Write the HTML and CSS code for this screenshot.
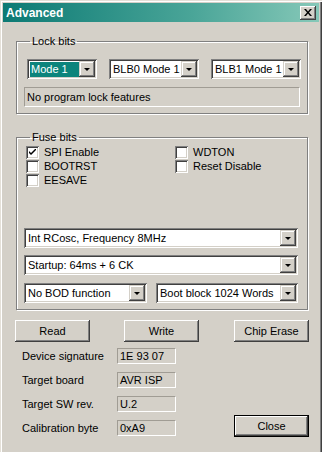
FILE: index.html
```html
<!DOCTYPE html>
<html>
<head>
<meta charset="utf-8">
<link rel="stylesheet" href="styles.css">
</head>
<body>
<div class="window">
  <div class="titlebar">
    <span class="title">Advanced</span>
    <span class="tb-close"><svg width="8" height="7" viewBox="0 0 8 7"><path d="M0 0h2l2 2.5L6 0h2L5 3.5 8 7H6L4 4.5 2 7H0l3-3.5z" fill="#000"/></svg></span>
  </div>

  <fieldset class="group lock">
    <legend>Lock bits</legend>
    <div class="row3">
      <div class="combo w70"><span class="val"><span class="sel">Mode 1</span></span><span class="arrow"></span></div>
      <div class="combo w90"><span class="val">BLB0 Mode 1</span><span class="arrow"></span></div>
      <div class="combo w90"><span class="val">BLB1 Mode 1</span><span class="arrow"></span></div>
    </div>
    <div class="field status">No program lock features</div>
  </fieldset>

  <fieldset class="group fuse">
    <legend>Fuse bits</legend>
    <div class="checks">
      <div class="chk"><span class="box"><svg width="7" height="7" viewBox="0 0 7 7"><path d="M0 2v2l2 2 5-5V-1L2 4z" fill="#000"/></svg></span>SPI Enable</div>
      <div class="chk"><span class="box"></span>WDTON</div>
      <div class="chk"><span class="box"></span>BOOTRST</div>
      <div class="chk"><span class="box"></span>Reset Disable</div>
      <div class="chk"><span class="box"></span>EESAVE</div>
    </div>
    <div class="combo full first"><span class="val">Int RCosc, Frequency 8MHz</span><span class="arrow"></span></div>
    <div class="combo full next"><span class="val">Startup: 64ms + 6 CK</span><span class="arrow"></span></div>
    <div class="row2">
      <div class="combo w123"><span class="val">No BOD function</span><span class="arrow"></span></div>
      <div class="combo w142"><span class="val">Boot block 1024 Words</span><span class="arrow"></span></div>
    </div>
  </fieldset>

  <div class="buttons">
    <div class="btn">Read</div>
    <div class="btn write">Write</div>
    <div class="btn erase">Chip Erase</div>
  </div>

  <div class="bottom">
    <div class="info">
      <span class="lbl">Device signature</span><span class="field ro">1E 93 07</span>
      <span class="lbl">Target board</span><span class="field ro">AVR ISP</span>
      <span class="lbl">Target SW rev.</span><span class="field ro">U.2</span>
      <span class="lbl">Calibration byte</span><span class="field ro">0xA9</span>
    </div>
    <div class="btn default">Close</div>
  </div>
</div>
</body>
</html>
```

FILE: styles.css
```css
* { box-sizing: border-box; }
html, body { margin: 0; padding: 0; }
body {
  width: 322px;
  height: 452px;
  overflow: hidden;
  background: #d4d0c8;
  font-family: "Liberation Sans", Arial, sans-serif;
  font-size: 11px;
  color: #000;
}
.window {
  height: 452px;
  padding: 3px 3px 0 3px;
  background: #d4d0c8;
  box-shadow: inset 1px 1px #e4e0d8, inset 2px 2px #fff, inset -1px 0 #404040, inset -2px 0 #808080;
}
.titlebar {
  height: 19px;
  display: flex;
  align-items: center;
  justify-content: space-between;
  padding: 0 3px 0 3px;
  background: linear-gradient(to right, #0c7a74, #4aa598 60%, #86c8b8);
}
.title {
  color: #fff;
  font-weight: bold;
  font-size: 12px;
}
.tb-close {
  width: 16px;
  height: 14px;
  display: flex;
  align-items: center;
  justify-content: center;
  background: #d4d0c8;
  box-shadow: inset -1px -1px #404040, inset 1px 1px #fff, inset -2px -2px #808080;
}

.group {
  margin: 0 11px 0 13px;
  border: 1px solid #808080;
  box-shadow: inset 1px 1px #fff, 1px 1px #fff;
  min-inline-size: 0;
}
.group legend {
  margin-left: 6px;
  padding: 0 2px;
  line-height: 13px;
}
.lock {
  margin-top: 13px;
  padding: 11px 6px 6px 7px;
}
.fuse {
  margin-top: 17px;
  padding: 1px 6px 6px 7px;
}

.row3 {
  display: flex;
  gap: 12px;
  margin-left: 3px;
}
.combo {
  height: 20px;
  display: flex;
  padding: 2px;
  background: #fff;
  box-shadow: inset 1px 1px #808080, inset -1px -1px #fff, inset 2px 2px #404040, inset -2px -2px #d4d0c8;
}
.combo .val {
  flex: 1;
  display: flex;
  align-items: center;
  padding-left: 2px;
  white-space: nowrap;
  overflow: hidden;
}
.combo .sel {
  background: #0c847c;
  color: #fff;
  padding: 1px 2px 1px 1px;
  margin-left: -1px;
  flex: 1;
  line-height: 13px;
}
.combo .arrow {
  width: 16px;
  height: 16px;
  position: relative;
  background: #d4d0c8;
  box-shadow: inset -1px -1px #404040, inset 1px 1px #d4d0c8, inset -2px -2px #808080, inset 2px 2px #fff;
}
.combo .arrow::after {
  content: "";
  position: absolute;
  left: 5px;
  top: 7px;
  border-left: 3px solid transparent;
  border-right: 3px solid transparent;
  border-top: 3px solid #000;
}
.w70 { width: 70px; }
.w90 { width: 90px; }
.w123 { width: 123px; }
.w142 { width: 142px; }
.full { width: 274px; }
.first { margin-top: 41px; }
.next { margin-top: 7px; }
.row2 {
  display: flex;
  gap: 9px;
  margin-top: 8px;
}

.field {
  display: flex;
  align-items: center;
  padding-left: 2px;
  background: #d4d0c8;
  border: 1px solid;
  border-color: #a09c94 #fff #fff #a09c94;
  white-space: nowrap;
}
.status {
  margin-top: 8px;
  height: 20px;
  width: 276px;
}

.checks {
  display: grid;
  grid-template-columns: 149px 1fr;
  grid-auto-rows: 14px;
  margin-left: 2px;
}
.chk {
  display: flex;
  align-items: center;
}
.box {
  width: 13px;
  height: 13px;
  margin-right: 5px;
  display: flex;
  align-items: center;
  justify-content: center;
  background: #fff;
  box-shadow: inset 1px 1px #808080, inset -1px -1px #fff, inset 2px 2px #404040, inset -2px -2px #d4d0c8;
}

.buttons {
  display: flex;
  margin: 10px 0 0 12px;
}
.btn {
  width: 75px;
  height: 22px;
  display: flex;
  align-items: center;
  justify-content: center;
  background: #d4d0c8;
  box-shadow: inset -1px -1px #404040, inset 1px 1px #fff, inset -2px -2px #808080;
}
.btn.write { margin-left: 34px; }
.btn.erase { margin-left: 35px; }
.btn.default {
  border: 1px solid #000;
  margin: 67px 0 0 58px;
}

.bottom {
  display: flex;
  margin: 6px 0 0 19px;
}
.info {
  display: grid;
  grid-template-columns: 95px 59px;
  grid-auto-rows: 16px;
  row-gap: 8px;
}
.lbl {
  display: flex;
  align-items: center;
}
.ro {
  height: 16px;
}
```
